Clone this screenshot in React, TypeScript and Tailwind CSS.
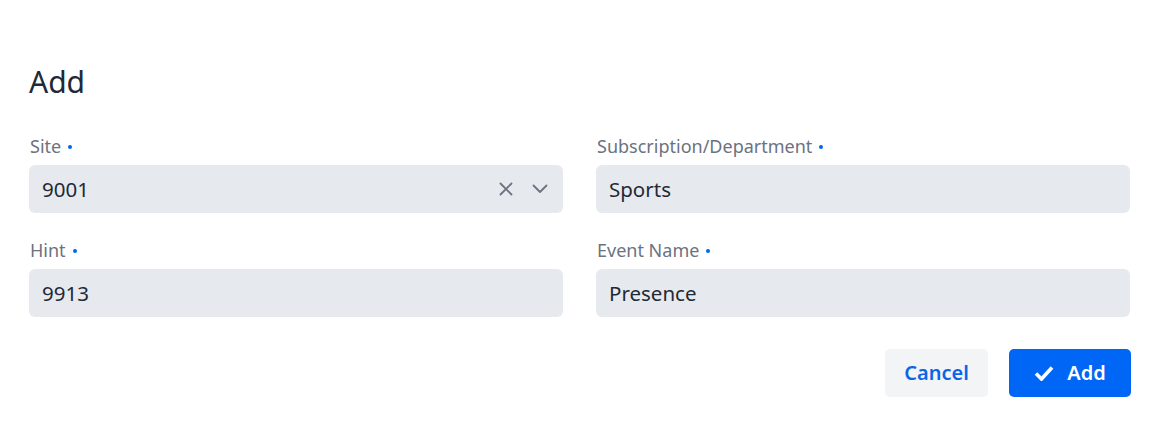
import React from "react";

function Label({ children }: { children: React.ReactNode }) {
  return (
    <div className="flex items-center h-[24px] mb-[7px] ml-[1px] text-[18px] leading-[24px] text-[#6b7280]">
      <span>{children}</span>
      <span className="ml-[7px] mt-[2px] w-[4px] h-[4px] rounded-full bg-[#0066f0]" />
    </div>
  );
}

function Field({ label, value, select }: { label: string; value: string; select?: boolean }) {
  return (
    <div className="flex flex-col">
      <Label>{label}</Label>
      <div className="flex items-center h-[48px] rounded-[6px] bg-[#e6e9ee] pl-[13px] pr-[15px]">
        <span className="flex-1 text-[20.5px] leading-[28px] text-[#1f2937]">{value}</span>
        {select && (
          <div className="flex items-center gap-[19px]">
            <svg width="14" height="14" viewBox="0 0 14 14" fill="none">
              <path d="M1.5 1.5 L12.5 12.5 M12.5 1.5 L1.5 12.5" stroke="#6b7280" strokeWidth="1.8" strokeLinecap="round" />
            </svg>
            <svg width="16" height="10" viewBox="0 0 16 10" fill="none">
              <path d="M1.5 1.5 L8 8 L14.5 1.5" stroke="#6b7280" strokeWidth="1.8" strokeLinecap="round" strokeLinejoin="round" />
            </svg>
          </div>
        )}
      </div>
    </div>
  );
}

export default function App() {
  return (
    <div
      className="w-[1162px] h-[433px] bg-white pt-[64px] pl-[29px] pr-[32px]"
      style={{ fontFamily: '"Noto Sans", "Open Sans", sans-serif' }}
    >
      <h1 className="text-[30px] leading-[36px] text-[#1f2937]">Add</h1>
      <div className="grid grid-cols-2 gap-x-[33px] gap-y-[25px] mt-[34px]">
        <Field label="Site" value="9001" select />
        <Field label="Subscription/Department" value="Sports" />
        <Field label="Hint" value="9913" />
        <Field label="Event Name" value="Presence" />
      </div>
      <div className="flex justify-end gap-[21px] mt-[32px] mr-[-1px]">
        <button className="h-[48px] w-[103px] rounded-[5px] bg-[#f3f4f6] text-[20px] font-semibold text-[#0a66e6]">
          Cancel
        </button>
        <button className="h-[48px] w-[122px] rounded-[5px] bg-[#0066f5] text-[20px] font-semibold text-white flex items-center justify-center gap-[13px]">
          <svg width="20" height="16" viewBox="0 0 20 16" fill="none">
            <path d="M2 8.5 L7.5 14 L18 2.5" stroke="white" strokeWidth="3.6" strokeLinejoin="miter" />
          </svg>
          <span>Add</span>
        </button>
      </div>
    </div>
  );
}
